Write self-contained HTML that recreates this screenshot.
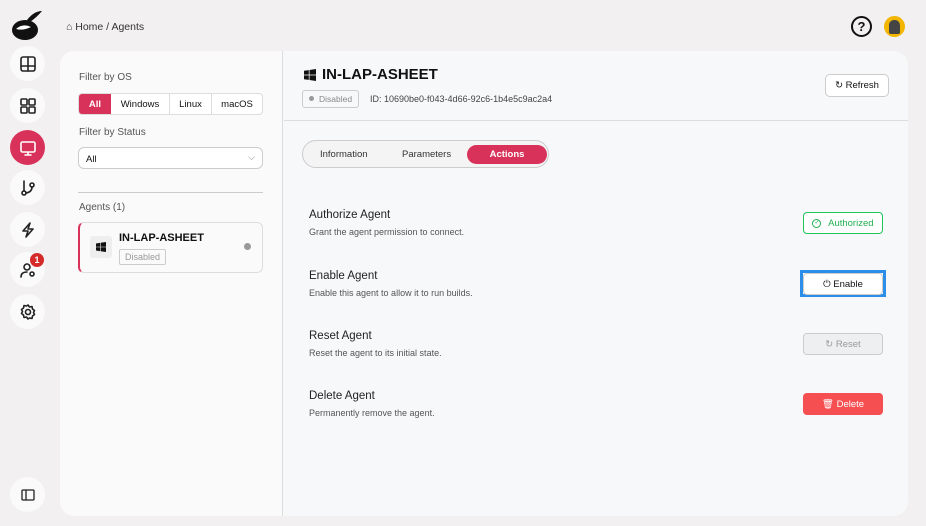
<!DOCTYPE html>
<html><head><style>
*{box-sizing:border-box;margin:0;padding:0}
body{width:926px;height:526px;background:#f2f0f0;font-family:"Liberation Sans",sans-serif;position:relative;overflow:hidden;color:#111}
.a{position:absolute}
.sb{position:absolute;left:10px;width:35px;height:35px;border-radius:50%;background:#fafafa;display:flex;align-items:center;justify-content:center}
.sb svg{width:18px;height:18px;fill:none;stroke:#222;stroke-width:1.6;stroke-linecap:round;stroke-linejoin:round}
.t{font-size:10px;color:#555}
.row .h{font-size:11.5px;color:#222}
.row .d{font-size:9px;color:#555;margin-top:6px}
.btn{position:absolute;left:803px;width:80px;height:22px;border-radius:4px;font-size:9.5px;display:flex;align-items:center;justify-content:center;gap:4px}
</style></head><body>
<!-- logo -->
<svg class="a" style="left:11px;top:8px" width="32" height="34" viewBox="0 0 32 34"><ellipse cx="14" cy="22" rx="13" ry="10" fill="#111"/><path d="M16 12 Q23 3 31 3 Q26 9 19 14Z" fill="#111"/><path d="M5 21 Q12 15 20 19 Q12 23 5 21Z" fill="#fff"/></svg>
<div class="sb" style="top:46px"><svg viewBox="0 0 18 18"><rect x="2" y="2" width="14" height="14" rx="2"/><path d="M2 11h14M9 2v14"/></svg></div>
<div class="sb" style="top:88px"><svg viewBox="0 0 18 18"><rect x="2" y="2" width="6" height="6" rx="1"/><rect x="10" y="2" width="6" height="6" rx="1"/><rect x="2" y="10" width="6" height="6" rx="1"/><rect x="10" y="10" width="6" height="6" rx="1"/></svg></div>
<div class="sb" style="top:130px;background:#d9325a"><svg viewBox="0 0 18 18" style="stroke:#fff"><rect x="2" y="3" width="14" height="10" rx="1.5"/><path d="M9 13v3M6 16h6"/></svg></div>
<div class="sb" style="top:170px"><svg viewBox="0 0 18 18"><circle cx="5" cy="14" r="2"/><circle cx="13" cy="6" r="2"/><path d="M5 2v10M13 8q0 5-6 6"/></svg></div>
<div class="sb" style="top:212px"><svg viewBox="0 0 18 18"><path d="M11 2L4 10h5l-2 6 7-8H9z"/></svg></div>
<div class="sb" style="top:252px"><svg viewBox="0 0 18 18"><circle cx="8" cy="6" r="3"/><path d="M2 16q0-5 6-5"/><circle cx="13" cy="13" r="2"/></svg></div>
<div class="a" style="left:30px;top:253px;width:14px;height:14px;border-radius:50%;background:#d42a2a;color:#fff;font-size:9px;font-weight:bold;text-align:center;line-height:14px">1</div>
<div class="sb" style="top:294px"><svg viewBox="0 0 18 18"><circle cx="9" cy="9" r="2.5"/><path d="M9 2l1.5 2 2.5-.5.5 2.5 2 1.5-1 2 1 2-2 1.5-.5 2.5-2.5-.5L9 16l-1.5-2-2.5.5-.5-2.5-2-1.5 1-2-1-2 2-1.5.5-2.5 2.5.5z"/></svg></div>
<div class="sb" style="top:477px"><svg viewBox="0 0 18 18" style="stroke-width:1.3"><rect x="3" y="4" width="12" height="10" rx="1"/><path d="M7 4v10"/></svg></div>
<!-- breadcrumb -->
<div class="a" style="left:66px;top:21px;font-size:10.5px;color:#333">⌂ Home / Agents</div>
<div class="a" style="left:851px;top:16px;width:21px;height:21px;border:2px solid #111;border-radius:50%;text-align:center;font-weight:bold;font-size:13px;line-height:17px">?</div>
<div class="a" style="left:884px;top:16px;width:21px;height:21px;border-radius:50%;background:#f2b600"><div style="margin:4px auto 0;width:11px;height:14px;background:#444;border-radius:5px 5px 2px 2px"></div></div>
<!-- card -->
<div class="a" style="left:60px;top:51px;width:848px;height:465px;border-radius:14px;background:#f7f8fa;overflow:hidden">
 <div class="a" style="left:0;top:0;width:223px;height:465px;background:#fafafa;border-right:1px solid #ddd"></div>
 <div class="a" style="left:224px;top:69px;width:624px;height:1px;background:#ddd"></div>
</div>
<!-- left panel -->
<div class="a t" style="left:79px;top:72px">Filter by OS</div>
<div class="a" style="left:78px;top:93px;width:185px;height:22px;border:1px solid #ddd;border-radius:4px;background:#fff;display:flex;font-size:9.5px">
 <div style="width:32px;background:#d9325a;color:#fff;border-radius:3px 0 0 3px;display:flex;align-items:center;justify-content:center;font-weight:bold">All</div>
 <div style="width:59px;border-right:1px solid #ddd;display:flex;align-items:center;justify-content:center">Windows</div>
 <div style="width:42px;border-right:1px solid #ddd;display:flex;align-items:center;justify-content:center">Linux</div>
 <div style="flex:1;display:flex;align-items:center;justify-content:center">macOS</div>
</div>
<div class="a t" style="left:79px;top:127px">Filter by Status</div>
<div class="a" style="left:78px;top:147px;width:185px;height:22px;border:1px solid #ccc;border-radius:6px;background:#fff;font-size:9.5px;padding:6px 7px">All<span style="position:absolute;right:7px;top:4px;color:#888;font-size:9px">⌵</span></div>
<div class="a" style="left:78px;top:192px;width:185px;height:1px;background:#ccc"></div>
<div class="a t" style="left:79px;top:202px">Agents (1)</div>
<div class="a" style="left:78px;top:222px;width:185px;height:51px;border:1px solid #ddd;border-left:2px solid #d9325a;border-radius:6px;background:#fafafa"></div>
<div class="a" style="left:90px;top:236px;width:22px;height:22px;background:#eee;border-radius:3px"><svg style="margin:6px" width="10" height="10" viewBox="0 0 10 10"><path d="M0 1.5l4-.6V4.7H0zM4.6.8L10 0v4.7H4.6zM0 5.3h4v3.8l-4-.6zM4.6 5.3H10V10l-5.4-.8z" fill="#111"/></svg></div>
<div class="a" style="left:119px;top:232px;font-size:11px;font-weight:bold">IN-LAP-ASHEET</div>
<div class="a" style="left:119px;top:249px;border:1px solid #ccc;border-radius:2px;font-size:9px;color:#999;padding:2px 5px">Disabled</div>
<div class="a" style="left:244px;top:243px;width:7px;height:7px;border-radius:50%;background:#999"></div>
<!-- right header -->
<svg class="a" style="left:304px;top:69px" width="12" height="12" viewBox="0 0 10 10"><path d="M0 1.5l4-.6V4.7H0zM4.6.8L10 0v4.7H4.6zM0 5.3h4v3.8l-4-.6zM4.6 5.3H10V10l-5.4-.8z" fill="#111"/></svg>
<div class="a" style="left:322px;top:66px;font-size:15px;font-weight:bold">IN-LAP-ASHEET</div>
<div class="a" style="left:302px;top:90px;border:1px solid #ccc;border-radius:3px;font-size:8.5px;color:#888;padding:3px 6px"><span style="display:inline-block;width:5px;height:5px;background:#999;border-radius:50%;margin-right:5px;vertical-align:1px"></span>Disabled</div>
<div class="a" style="left:370px;top:94px;font-size:9px;color:#444">ID: 10690be0-f043-4d66-92c6-1b4e5c9ac2a4</div>
<div class="a" style="left:825px;top:74px;width:64px;height:23px;border:1px solid #ccc;border-radius:5px;background:#fff;font-size:9.5px;display:flex;align-items:center;justify-content:center">↻&nbsp;Refresh</div>
<!-- tabs -->
<div class="a" style="left:302px;top:140px;width:247px;height:28px;border:1px solid #ccc;border-radius:14px;background:#f4f4f4;font-size:9.5px;color:#333">
 <span class="a" style="left:17px;top:8px">Information</span>
 <span class="a" style="left:99px;top:8px">Parameters</span>
 <div class="a" style="left:164px;top:4px;width:80px;height:19px;border-radius:10px;background:#d9325a;color:#fff;font-weight:bold;text-align:center;line-height:19px">Actions</div>
</div>
<!-- rows -->
<div class="a row" style="left:309px;top:209px"><div class="h">Authorize Agent</div><div class="d">Grant the agent permission to connect.</div></div>
<div class="a row" style="left:309px;top:270px"><div class="h">Enable Agent</div><div class="d">Enable this agent to allow it to run builds.</div></div>
<div class="a row" style="left:309px;top:330px"><div class="h">Reset Agent</div><div class="d">Reset the agent to its initial state.</div></div>
<div class="a row" style="left:309px;top:390px"><div class="h">Delete Agent</div><div class="d">Permanently remove the agent.</div></div>
<div class="btn" style="top:212px;border:1px solid #1fc45a;color:#1fb050;background:#fff"><span style="display:inline-block;width:9px;height:9px;border:1px solid #1fb050;border-radius:50%;font-size:6px;line-height:7px;text-align:center">✓</span>&nbsp;Authorized</div>
<div class="a" style="left:800px;top:270px;width:86px;height:27px;border:3px solid #2b8ee8"></div>
<div class="btn" style="top:273px;border:1px solid #ccc;background:#fff;color:#111">⏻ Enable</div>
<div class="btn" style="top:333px;border:1px solid #ccc;background:#eeeff1;color:#999">↻ Reset</div>
<div class="btn" style="top:393px;background:#f54f52;color:#fff">🗑 Delete</div>
</body></html>
